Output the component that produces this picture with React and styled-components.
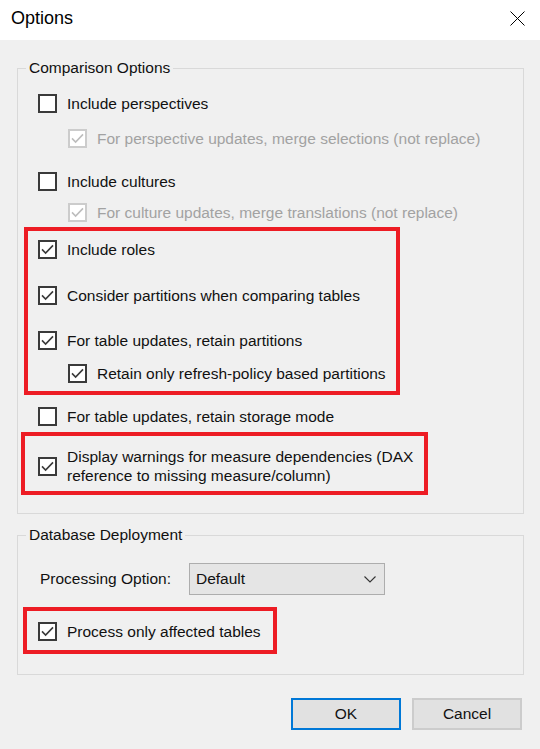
import React from "react";
import styled, { createGlobalStyle } from "styled-components";

const GlobalStyle = createGlobalStyle`
  html, body {
    margin: 0;
    padding: 0;
    background: #f0f0f0;
  }
  * {
    box-sizing: border-box;
  }
`;

const Dialog = styled.div`
  width: 540px;
  height: 749px;
  display: flex;
  flex-direction: column;
  background: #f0f0f0;
  font-family: "Liberation Sans", Arial, sans-serif;
  font-size: 15.5px;
  color: #111;
  overflow: hidden;
`;

const TitleBar = styled.div`
  height: 40px;
  flex: none;
  display: flex;
  align-items: center;
  justify-content: space-between;
  background: #fff;
  padding: 0 15px 4px 11px;
`;

const Title = styled.div`
  font-size: 18px;
  color: #000;
`;

const Body = styled.div`
  flex: 1;
  display: flex;
  flex-direction: column;
  padding: 0 16px 0 17px;
`;

const Group = styled.fieldset`
  margin: ${(p) => p.$top}px 0 0;
  padding: 0 20px ${(p) => p.$bottom}px 20px;
  border: 1px solid #d9d9d9;
  min-width: 0;
`;

const Legend = styled.legend`
  margin-left: -12px;
  padding: 0 3px;
  line-height: 20px;
  height: 20px;
  color: #111;
`;

const Row = styled.div`
  display: flex;
  align-items: center;
  gap: 10px;
  margin-top: ${(p) => p.$gap || 0}px;
  margin-left: ${(p) => (p.$sub ? 30 : 0)}px;
  color: ${(p) => (p.$disabled ? "#a2a2a2" : "#111")};
  line-height: 19px;
  min-height: 20px;
`;

const Label = styled.span`
  white-space: nowrap;
`;

const Box = styled.span`
  flex: none;
  width: 19px;
  height: 19px;
  border: 2px solid ${(p) => (p.$disabled ? "#cccccc" : "#3a3a3a")};
  background: #fff;
  display: flex;
  align-items: center;
  justify-content: center;
`;

const Highlight = styled.div`
  width: ${(p) => p.$width}px;
  margin: ${(p) => p.$top}px 0 0 ${(p) => -p.$shift}px;
  padding: ${(p) => p.$pad};
  padding-left: ${(p) => p.$shift - 4}px;
  border: 4px solid #ed1c24;
`;

const FieldRow = styled.div`
  display: flex;
  align-items: center;
  margin-top: ${(p) => p.$gap}px;
`;

const FieldLabel = styled.span`
  width: 151px;
  padding-left: 2px;
`;

const Select = styled.div`
  width: 196px;
  height: 32px;
  display: flex;
  align-items: center;
  justify-content: space-between;
  padding: 0 8px 0 6px;
  background: #e5e5e5;
  border: 1px solid #adadad;
  color: #111;
`;

const Footer = styled.div`
  display: flex;
  justify-content: flex-end;
  gap: 11px;
  margin-top: 23px;
  padding-right: 2px;
`;

const Button = styled.div`
  width: 110px;
  height: 32px;
  display: flex;
  align-items: center;
  justify-content: center;
  background: #e1e1e1;
  border: ${(p) => (p.$primary ? "2px solid #0078d7" : "2px solid #cccccc")};
  color: #111;
`;

const Check = ({ checked, disabled }) => (
  <Box $disabled={disabled}>
    {checked && (
      <svg width="15" height="15" viewBox="0 0 15 15">
        <path
          d="M2 7.4 L5.6 11 L13 3.4"
          fill="none"
          stroke={disabled ? "#bdbdbd" : "#3a3a3a"}
          strokeWidth="1.6"
        />
      </svg>
    )}
  </Box>
);

const Option = ({ checked, disabled, sub, gap, children }) => (
  <Row $sub={sub} $disabled={disabled} $gap={gap}>
    <Check checked={checked} disabled={disabled} />
    <Label>{children}</Label>
  </Row>
);

const CloseIcon = () => (
  <svg width="15" height="15" viewBox="0 0 15 15">
    <path d="M0.5 0.5 L14.5 14.5 M14.5 0.5 L0.5 14.5" stroke="#000" strokeWidth="1" />
  </svg>
);

const Chevron = () => (
  <svg width="12" height="7" viewBox="0 0 12 7">
    <path d="M0.5 0.5 L6 6 L11.5 0.5" fill="none" stroke="#333" strokeWidth="1.1" />
  </svg>
);

const App = () => {
  return (
    <Dialog>
      <GlobalStyle />
      <TitleBar>
        <Title>Options</Title>
        <CloseIcon />
      </TitleBar>
      <Body>
        <Group $top={18} $bottom={18}>
          <Legend>Comparison Options</Legend>
          <Option gap={15}>Include perspectives</Option>
          <Option sub checked disabled gap={15}>
            For perspective updates, merge selections (not replace)
          </Option>
          <Option gap={23}>Include cultures</Option>
          <Option sub checked disabled gap={11}>
            For culture updates, merge translations (not replace)
          </Option>
          <Highlight $width={376} $shift={14} $top={5} $pad="8px 0 8px">
            <Option checked>Include roles</Option>
            <Option checked gap={26}>
              Consider partitions when comparing tables
            </Option>
            <Option checked gap={25}>
              For table updates, retain partitions
            </Option>
            <Option sub checked gap={13}>
              Retain only refresh-policy based partitions
            </Option>
          </Highlight>
          <Option gap={11}>For table updates, retain storage mode</Option>
          <Highlight $width={407} $shift={17} $top={6} $pad="11px 0 6px">
            <Row>
              <Check checked />
              <Label>
                Display warnings for measure dependencies (DAX
                <br />
                reference to missing measure/column)
              </Label>
            </Row>
          </Highlight>
        </Group>

        <Group $top={11} $bottom={20}>
          <Legend>Database Deployment</Legend>
          <FieldRow $gap={18}>
            <FieldLabel>Processing Option:</FieldLabel>
            <Select>
              <span>Default</span>
              <Chevron />
            </Select>
          </FieldRow>
          <Highlight $width={254} $shift={15} $top={12} $pad="10px 0 9px">
            <Option checked>Process only affected tables</Option>
          </Highlight>
        </Group>

        <Footer>
          <Button $primary>OK</Button>
          <Button>Cancel</Button>
        </Footer>
      </Body>
    </Dialog>
  );
};

export default App;
